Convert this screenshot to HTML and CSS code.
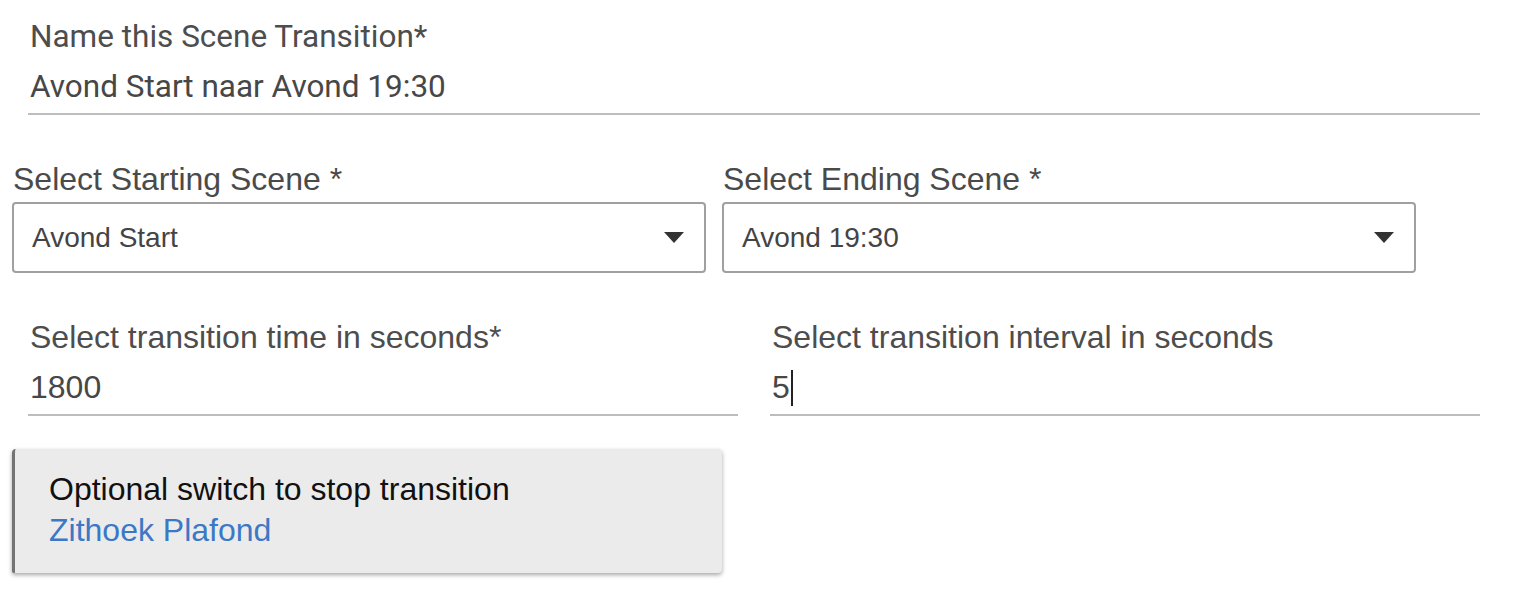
FILE: index.html
```html
<!DOCTYPE html>
<html lang="en">
<head>
  <meta charset="UTF-8">
  <title>Scene Transition</title>
  <link rel="stylesheet" href="styles.css">
</head>
<body>
  <form class="transition-form">
    <div class="text-field wide">
      <label class="field-label">Name this Scene Transition*</label>
      <div class="field-value">Avond Start naar Avond 19:30</div>
    </div>

    <div class="select-row">
      <div class="select-field">
        <label class="select-label">Select Starting Scene *</label>
        <div class="select-box">
          <span>Avond Start</span>
          <svg class="caret" width="20" height="12" viewBox="0 0 20 12"><path d="M0 0 H20 L10 11 Z" fill="#333"/></svg>
        </div>
      </div>
      <div class="select-field">
        <label class="select-label">Select Ending Scene *</label>
        <div class="select-box">
          <span>Avond 19:30</span>
          <svg class="caret" width="20" height="12" viewBox="0 0 20 12"><path d="M0 0 H20 L10 11 Z" fill="#333"/></svg>
        </div>
      </div>
    </div>

    <div class="input-row">
      <div class="text-field">
        <label class="field-label hv">Select transition time in seconds*</label>
        <div class="field-value hv">1800</div>
      </div>
      <div class="text-field">
        <label class="field-label hv">Select transition interval in seconds</label>
        <div class="field-value hv">5<span class="cursor"></span></div>
      </div>
    </div>

    <div class="switch-card">
      <div class="card-title">Optional switch to stop transition</div>
      <a class="card-link" href="#">Zithoek Plafond</a>
    </div>
  </form>
</body>
</html>
```

FILE: styles.css
```css
body {
  margin: 0;
  background: #fff;
  font-family: 'Liberation Sans', Arial, sans-serif;
  color: #4a4a4a;
}

.transition-form {
  padding: 20px 0 21px 12px;
  width: 1468px;
}

.text-field {
  border-bottom: 2px solid #bdbdbd;
  padding-bottom: 9px;
}

.text-field.wide {
  margin-left: 16px;
  width: 1452px;
}

.field-label,
.field-value {
  display: block;
  font-family: Roboto, sans-serif;
  font-size: 31.5px;
  line-height: 34px;
  color: #4d4d4d;
  padding-left: 2px;
}

.field-value {
  margin-top: 16px;
  color: #474747;
}

.hv {
  font-family: 'Liberation Sans', Arial, sans-serif;
  font-size: 32px;
}

.select-row {
  display: grid;
  grid-template-columns: 694px 694px;
  gap: 16px;
  margin-top: 47px;
}

.select-label {
  display: block;
  font-size: 32px;
  line-height: 34px;
  color: #4a4a4a;
  padding-left: 1px;
}

.select-box {
  margin-top: 6px;
  height: 67px;
  border: 2px solid #a0a0a0;
  border-radius: 4px;
  display: flex;
  align-items: center;
  justify-content: space-between;
  padding: 0 20px 0 18px;
  font-size: 28px;
  color: #444;
}

.caret {
  display: block;
}

.input-row {
  display: grid;
  grid-template-columns: 710px 710px;
  gap: 32px;
  margin: 47px 0 0 16px;
}

.input-row .text-field {
  padding-bottom: 8px;
}

.cursor {
  display: inline-block;
  width: 2px;
  height: 36px;
  background: #222;
  vertical-align: -8px;
  margin-left: 1px;
}

.switch-card {
  margin-top: 33px;
  width: 673px;
  height: 75px;
  padding: 23px 0 26px 34px;
  background: #ebebeb;
  border-left: 3px solid #737373;
  border-radius: 4px 4px 4px 2px;
  box-shadow: 0 2px 4px rgba(0, 0, 0, 0.35);
}

.card-title {
  font-size: 32px;
  line-height: 34px;
  color: #111;
}

.card-link {
  display: block;
  margin-top: 7px;
  font-size: 32px;
  line-height: 34px;
  color: #3b78c6;
  text-decoration: none;
}
```
